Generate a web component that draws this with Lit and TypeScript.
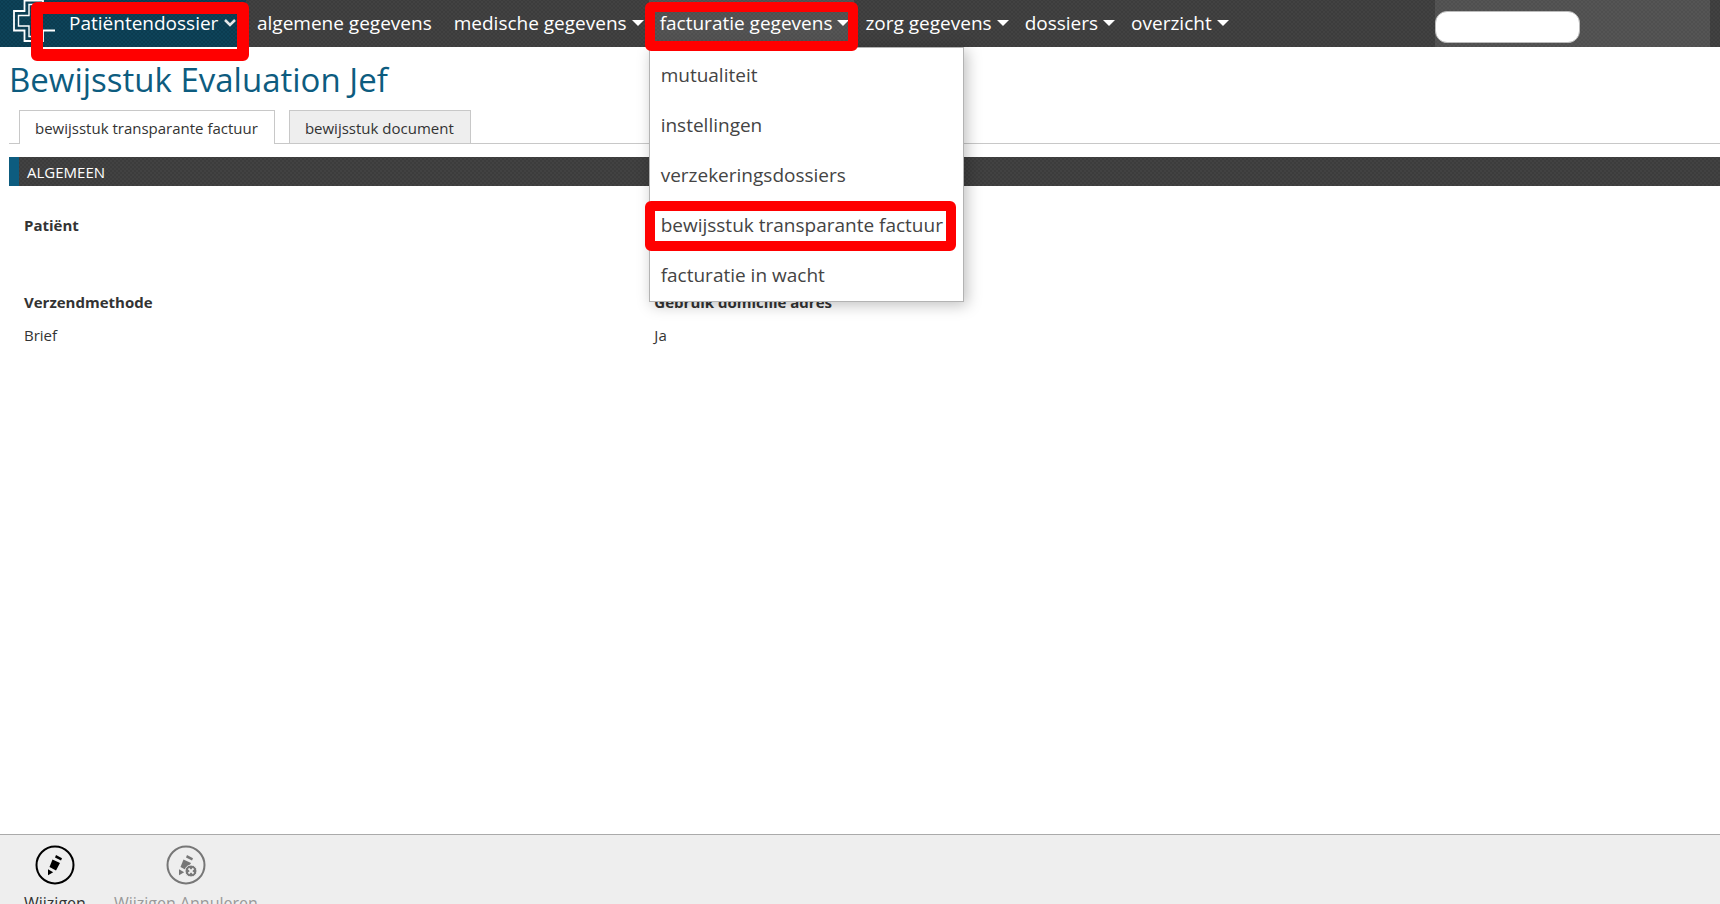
import { LitElement, html, css, svg, nothing } from "lit";
import { customElement } from "lit/decorators.js";
import { classMap } from "lit/directives/class-map.js";

interface NavItem {
  label: string;
  menu: boolean;
  entries?: string[];
}

const NAV: NavItem[] = [
  { label: "algemene gegevens", menu: false },
  { label: "medische gegevens", menu: true },
  {
    label: "facturatie gegevens",
    menu: true,
    entries: [
      "mutualiteit",
      "instellingen",
      "verzekeringsdossiers",
      "bewijsstuk transparante factuur",
      "facturatie in wacht",
    ],
  },
  { label: "zorg gegevens", menu: true },
  { label: "dossiers", menu: true },
  { label: "overzicht", menu: true },
];

const MARKED_ENTRY = "bewijsstuk transparante factuur";

const pencil = svg`
  <path d="M17.500 14.500 L25 18 L21 25.500 L14.500 22 Z" />
  <path d="M21 10 L27 13.300 L26 15.500 L20 12.500 Z" />
  <path d="M13 24.300 L18.200 27.300 L13 30.300 Z" />`;

@customElement("app-root")
export class AppRoot extends LitElement {
  static styles = css`
    :host {
      display: flex;
      flex-direction: column;
      height: 100vh;
      overflow: hidden;
      background: #fff;
      color: #333;
      font-family: "Segoe UI", "Open Sans", "Noto Sans", sans-serif;
      font-size: 15px;
      line-height: 20px;
    }
    * {
      box-sizing: border-box;
    }
    a {
      color: inherit;
      text-decoration: none;
    }
    button {
      font: inherit;
      color: inherit;
      background: none;
      border: 0;
      padding: 0;
    }
    .weave {
      background-color: #3c3c3c;
      background-image: radial-gradient(#424242 1px, transparent 1px),
        radial-gradient(#424242 1px, transparent 1px);
      background-size: 4px 4px;
      background-position: 0 0, 2px 2px;
    }
    .topbar {
      display: flex;
      flex: none;
      height: 47px;
      color: #fff;
      font-size: 19px;
      line-height: 46px;
    }
    .module {
      position: relative;
      display: flex;
      width: 246px;
      padding-left: 12px;
      background-color: #0b3c50;
      background-image: radial-gradient(#0e4359 1px, transparent 1px),
        radial-gradient(#0e4359 1px, transparent 1px);
    }
    .logo {
      flex: none;
      width: 44px;
      height: 44px;
    }
    .module-button {
      display: flex;
      align-items: center;
      gap: 6px;
      height: 46px;
      margin-left: 13px;
      white-space: nowrap;
    }
    .mark {
      position: absolute;
      z-index: 3;
      border: 10px solid #f00;
      border-radius: 6px;
      pointer-events: none;
    }
    .mark-module {
      inset: 2px -3px -14px 31px;
      border-width: 12px;
    }
    .mark-nav {
      inset: 2px -4px -4px -4px;
    }
    .mark-entry {
      inset: 0 7px 0 -5px;
    }
    .nav {
      display: flex;
      flex: 1;
    }
    .nav-item {
      position: relative;
      padding: 0 5px 0 11px;
    }
    .nav-item.plain {
      padding-right: 11px;
    }
    .nav-item.open {
      background: rgba(255, 255, 255, 0.1);
    }
    .nav-button {
      display: flex;
      align-items: center;
      gap: 5px;
      white-space: nowrap;
    }
    .caret {
      border: 6px solid transparent;
      border-top-color: #fff;
      border-bottom: 0;
    }
    .menu {
      position: absolute;
      z-index: 2;
      top: 47px;
      left: 0;
      width: 315px;
      margin: 0;
      padding: 3px 0 0;
      list-style: none;
      background: #fff;
      border: 1px solid #b3b3b3;
      box-shadow: 3px 3px 14px rgba(0, 0, 0, 0.25);
      color: #444;
      line-height: 48px;
    }
    .menu-entry {
      position: relative;
      height: 50px;
      padding-left: 11px;
      white-space: nowrap;
    }
    .account {
      display: flex;
      align-items: center;
      width: 275px;
      margin-right: 10px;
      padding-top: 7px;
      background: rgba(255, 255, 255, 0.1);
    }
    .search {
      width: 145px;
      height: 32px;
      padding: 0 12px;
      border: 1px solid #bbb;
      border-radius: 12px;
      background: #fff;
      font: inherit;
    }
    .main {
      flex: 1;
      padding-left: 9px;
    }
    .title {
      margin: 0;
      padding: 10px 0 7px;
      color: #0d5c7f;
      font-size: 33px;
      font-weight: 400;
      line-height: 46px;
    }
    .tabs {
      display: flex;
      gap: 14px;
      padding-left: 10px;
      border-bottom: 1px solid #c8c8c8;
    }
    .tab {
      height: 33px;
      padding: 0 16px 0 15px;
      border: 1px solid #c8c8c8;
      border-bottom: 0;
      background: #eee;
      line-height: 34px;
    }
    .tab.active {
      height: 34px;
      margin-bottom: -1px;
      background: #fff;
    }
    .section {
      margin: 13px 0 0;
      padding: 1px 0 0 8px;
      border-left: 10px solid #0d5c7f;
      color: #fff;
      font-size: 15px;
      font-weight: 400;
      line-height: 28px;
    }
    .fields {
      display: grid;
      grid-template-columns: 7fr 12fr;
      row-gap: 24px;
      margin: 0;
      padding-top: 29px;
    }
    .field {
      padding-left: 15px;
      min-height: 53px;
    }
    .field.wide {
      grid-column: 1 / -1;
    }
    .name {
      font-weight: 700;
    }
    .value {
      margin: 13px 0 0;
    }
    .actions {
      display: flex;
      flex: none;
      gap: 28px;
      height: 70px;
      overflow: hidden;
      padding: 10px 0 0 24px;
      background: #eee;
      border-top: 1px solid #aaa;
      font-size: 16px;
    }
    .action {
      display: flex;
      flex-direction: column;
      align-items: center;
      gap: 8px;
      height: 70px;
    }
    .action:disabled {
      color: #999;
    }
    .glyph {
      width: 40px;
      height: 40px;
    }
  `;

  private renderMenu(entries: string[]) {
    return html`<ul class="menu">
      ${entries.map(
        (entry) => html`<li class="menu-entry">
          <a href="#">${entry}</a>
          ${entry === MARKED_ENTRY
            ? html`<span class="mark mark-entry"></span>`
            : nothing}
        </li>`
      )}
    </ul>`;
  }

  private renderNavItem(item: NavItem) {
    const open = !!item.entries;
    return html`<div
      class=${classMap({ "nav-item": true, plain: !item.menu, open })}
    >
      <button class="nav-button" type="button">
        ${item.label}${item.menu ? html`<span class="caret"></span>` : nothing}
      </button>
      ${item.entries
        ? html`${this.renderMenu(item.entries)}<span class="mark mark-nav"></span>`
        : nothing}
    </div>`;
  }

  render() {
    return html`
      <header class="topbar weave">
        <div class="module weave">
          <svg class="logo" viewBox="0 0 44 44" fill="none" stroke="#fff" stroke-width="1.800" aria-hidden="true">
            <path d="M43 30.500 H31 V41 H12.500 V30.500 H2 V11 H12.500 V0.500 H31 V11 H42" />
            <path d="M30 36.500 H17 V26 H6.500 V15.500 H17 V4.500 H27 V16" stroke-width="1.400" />
          </svg>
          <button class="module-button" type="button">
            Patiëntendossier
            <svg width="12" height="8" viewBox="0 0 12 8" fill="none" stroke="#e4e8ea" stroke-width="2.500" aria-hidden="true">
              <path d="M1 1 L6 6 L11 1" />
            </svg>
          </button>
          <span class="mark mark-module"></span>
        </div>
        <nav class="nav">${NAV.map((item) => this.renderNavItem(item))}</nav>
        <div class="account">
          <input class="search" type="text" aria-label="Zoeken" />
        </div>
      </header>
      <main class="main">
        <h1 class="title">Bewijsstuk Evaluation Jef</h1>
        <nav class="tabs">
          <a class="tab active" href="#">bewijsstuk transparante factuur</a>
          <a class="tab" href="#">bewijsstuk document</a>
        </nav>
        <h2 class="section weave">ALGEMEEN</h2>
        <dl class="fields">
          <div class="field wide"><dt class="name">Patiënt</dt></div>
          <div class="field">
            <dt class="name">Verzendmethode</dt>
            <dd class="value">Brief</dd>
          </div>
          <div class="field">
            <dt class="name">Gebruik domicilie adres</dt>
            <dd class="value">Ja</dd>
          </div>
        </dl>
      </main>
      <footer class="actions">
        <button class="action" type="button">
          <svg class="glyph" viewBox="0 0 40 40" aria-hidden="true">
            <circle cx="20" cy="20" r="18.500" fill="none" stroke="#000" stroke-width="2" />
            ${pencil}
          </svg>
          Wijzigen
        </button>
        <button class="action" type="button" disabled>
          <svg class="glyph" viewBox="0 0 40 40" fill="#777" aria-hidden="true">
            <circle cx="20" cy="20" r="18.500" fill="none" stroke="#777" stroke-width="2" />
            ${pencil}
            <circle cx="25" cy="26" r="6" stroke="#eee" />
            <path d="M22.500 23.500 L27.500 28.500 M27.500 23.500 L22.500 28.500" stroke="#eee" stroke-width="1.800" />
          </svg>
          Wijzigen Annuleren
        </button>
      </footer>
    `;
  }
}
